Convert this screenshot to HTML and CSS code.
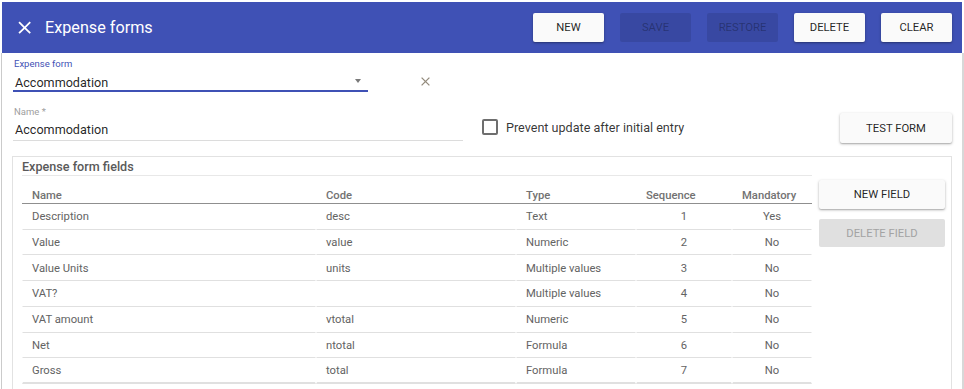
FILE: index.html
```html
<!DOCTYPE html>
<html lang="en">
<head>
<meta charset="utf-8">
<title>Expense forms</title>
<link rel="stylesheet" href="styles.css">
</head>
<body>
<div class="app">
  <header class="toolbar">
    <svg class="close-icon" viewBox="0 0 24 24" aria-hidden="true"><path d="M19 6.41L17.59 5 12 10.59 6.41 5 5 6.41 10.59 12 5 17.59 6.41 19 12 13.41 17.59 19 19 17.59 13.41 12z" fill="#fff"/></svg>
    <h1 class="title">Expense forms</h1>
    <div class="actions">
      <button class="btn raised">New</button>
      <button class="btn disabled">Save</button>
      <button class="btn disabled">Restore</button>
      <button class="btn raised">Delete</button>
      <button class="btn raised">Clear</button>
    </div>
  </header>
  <main class="content">
    <div class="row row-select">
      <div class="field select-field">
        <label class="field-label focused">Expense form</label>
        <div class="field-value focused">
          <span>Accommodation</span>
          <span class="arrow"></span>
        </div>
      </div>
      <svg class="clear-icon" viewBox="0 0 9 9" aria-hidden="true"><path d="M0.6 0.6L8.4 8.4M8.4 0.6L0.6 8.4" stroke="#938b7c" stroke-width="1.3" fill="none"/></svg>
    </div>
    <div class="row row-name">
      <div class="field name-field">
        <label class="field-label">Name *</label>
        <div class="field-value plain">Accommodation</div>
      </div>
      <div class="check">
        <span class="box"></span>
        <span class="check-label">Prevent update after initial entry</span>
      </div>
      <button class="btn raised test-btn">Test form</button>
    </div>
    <section class="panel">
      <div class="panel-main">
        <div class="panel-title">Expense form fields</div>
        <table class="grid">
          <colgroup>
            <col style="width:294px"><col style="width:200px"><col style="width:120px"><col style="width:96px"><col style="width:80px">
          </colgroup>
          <thead>
            <tr><th>Name</th><th>Code</th><th>Type</th><th>Sequence</th><th>Mandatory</th></tr>
          </thead>
          <tbody>
            <tr><td>Description</td><td>desc</td><td>Text</td><td class="c">1</td><td class="c">Yes</td></tr>
            <tr><td>Value</td><td>value</td><td>Numeric</td><td class="c">2</td><td class="c">No</td></tr>
            <tr><td>Value Units</td><td>units</td><td>Multiple values</td><td class="c">3</td><td class="c">No</td></tr>
            <tr><td>VAT?</td><td></td><td>Multiple values</td><td class="c">4</td><td class="c">No</td></tr>
            <tr><td>VAT amount</td><td>vtotal</td><td>Numeric</td><td class="c">5</td><td class="c">No</td></tr>
            <tr><td>Net</td><td>ntotal</td><td>Formula</td><td class="c">6</td><td class="c">No</td></tr>
            <tr><td>Gross</td><td>total</td><td>Formula</td><td class="c">7</td><td class="c">No</td></tr>
          </tbody>
        </table>
      </div>
      <div class="panel-side">
        <button class="btn raised side-btn">New field</button>
        <button class="btn flat-disabled side-btn del">Delete field</button>
      </div>
    </section>
  </main>
</div>
</body>
</html>
```
FILE: styles.css
```css
* { box-sizing: border-box; }
html, body { margin: 0; padding: 0; overflow: hidden; background: #fff; }
body { font-family: Roboto, "Noto Sans", Arial, sans-serif; }

.app {
  height: 389px;
  padding-top: 2px;
  display: flex;
  flex-direction: column;
}

.toolbar {
  margin: 0 2px;
  height: 51px;
  flex: none;
  background: #3f51b5;
  display: flex;
  align-items: center;
  padding: 0 10px 0 12px;
}
.close-icon { width: 21.3px; height: 21.3px; display: block; flex: none; }
.title {
  margin: 0 0 0 9.7px;
  font-size: 16.2px;
  font-weight: 400;
  color: #fff;
  line-height: normal;
}
.actions { margin-left: auto; display: flex; gap: 16px; }

.btn {
  width: 71px;
  height: 29px;
  border: 0;
  border-radius: 2px;
  padding: 0;
  font-family: Roboto, "Noto Sans", Arial, sans-serif;
  font-size: 11.25px;
  font-weight: 400;
  text-transform: uppercase;
}
.btn.raised {
  background: #fafafa;
  color: rgba(0,0,0,0.87);
  box-shadow: 0 1px 3px rgba(0,0,0,0.28), 0 1px 1px rgba(0,0,0,0.12);
}
.btn.disabled {
  background: rgba(0,0,0,0.1);
  color: rgba(0,0,0,0.3);
}
.btn.flat-disabled {
  background: #e0e0e0;
  color: #a3a3a3;
}

.content {
  flex: 1;
  margin-left: 1px;
  border-left: 1px solid #cbcbcb;
  border-right: 2px solid #d8d8d8;
  padding: 5px 10px 0;
  overflow: hidden;
}

.row { display: flex; }
.row-select { align-items: flex-end; }
.row-name { align-items: flex-start; margin-top: 14px; }

.field { margin-left: 1px; }
.select-field { width: 355px; }
.name-field { width: 450px; }
.field-label {
  display: block;
  padding-left: 1px;
  font-size: 9.5px;
  line-height: normal;
  color: #9e9e9e;
}
.field-label.focused { color: #3f51b5; }
.field-value {
  padding-left: 2px;
  font-size: 12.6px;
  line-height: normal;
  color: rgba(0,0,0,0.87);
}
.field-value.focused {
  margin-top: 6px;
  display: flex;
  justify-content: space-between;
  align-items: center;
  border-bottom: 2px solid #3f51b5;
}
.field-value.plain {
  margin-top: 5px;
  padding-bottom: 3px;
  border-bottom: 1px solid #dcdcdc;
}
.arrow {
  width: 0;
  height: 0;
  border-left: 3.5px solid transparent;
  border-right: 3.5px solid transparent;
  border-top: 4px solid #7a7a7a;
  margin: 0 7px 4px 0;
}
.clear-icon {
  width: 9px;
  height: 9px;
  display: block;
  margin: 0 0 6px 53px;
}

.check {
  display: flex;
  align-items: center;
  margin: 13px 0 0 19px;
}
.box {
  width: 16px;
  height: 16px;
  border: 2px solid #6e6e6e;
  border-radius: 2px;
}
.check-label {
  margin-left: 8px;
  font-size: 12.6px;
  color: rgba(0,0,0,0.8);
}
.test-btn {
  width: 112px;
  height: 30px;
  margin: 7px 0 0 auto;
}

.panel {
  margin-top: 13px;
  border: 1px solid #e2e2e2;
  border-bottom: 0;
  display: flex;
  align-items: flex-start;
  padding: 0 6px 20px 9px;
}
.panel-main { width: 790px; }
.panel-title {
  height: 19px;
  padding-top: 2px;
  line-height: 16px;
  font-size: 12.6px;
  font-weight: 500;
  color: #5a5a5a;
  border-bottom: 1px solid #e8e8e8;
}
.grid {
  width: 790px;
  table-layout: fixed;
  border-collapse: separate;
  border-spacing: 0;
}
.grid th {
  height: 28px;
  padding: 0 0 1px 10px;
  text-align: left;
  vertical-align: bottom;
  font-size: 11.25px;
  font-weight: 500;
  color: #727272;
  line-height: normal;
  border-bottom: 1px solid #8f8f8f;
}
.grid td {
  height: 25.71px;
  padding: 1px 0 0 9px;
  font-size: 11.25px;
  color: #636363;
  vertical-align: middle;
  border-left: 1px solid #fff;
  border-right: 1px solid #fff;
  border-bottom: 1px solid #e0e0e0;
  white-space: nowrap;
}
.grid td.c { text-align: center; padding-left: 0; }
.grid tbody tr:last-child td { border-bottom: 2px solid #e0e0e0; }

.panel-side {
  width: 126px;
  margin-left: 7px;
  padding-top: 23px;
  display: flex;
  flex-direction: column;
}
.side-btn { width: 126px; height: 29px; }
.side-btn.del { height: 28px; margin-top: 10px; }
```
